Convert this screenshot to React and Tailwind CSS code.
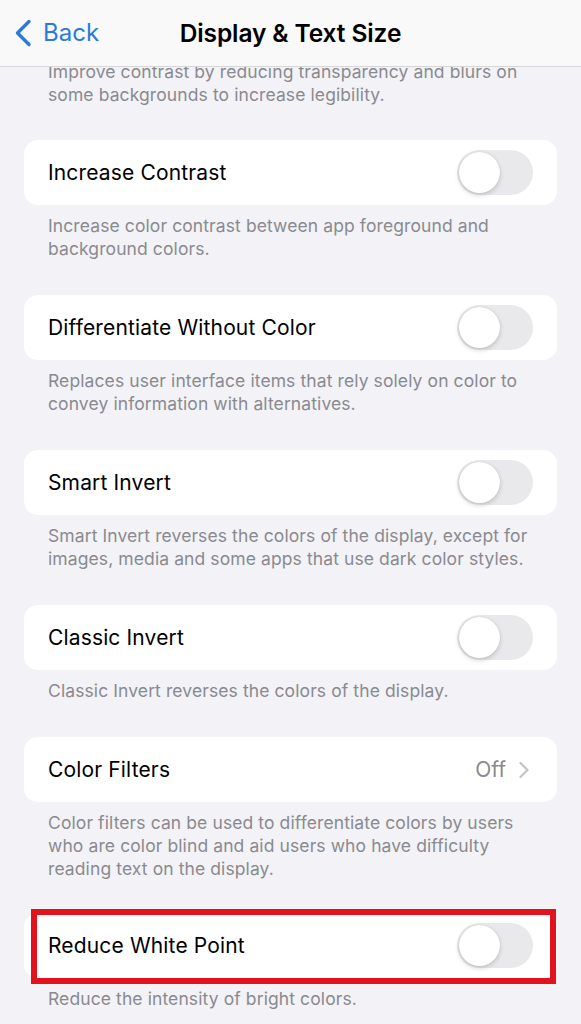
import React from "react";

const Toggle = () => (
  <div className="w-[76px] h-[45px] rounded-full bg-[#e9e9eb] p-[2px] flex items-center shrink-0">
    <div className="w-[41px] h-[41px] rounded-full bg-white shadow-[0_2px_5px_rgba(0,0,0,0.18),0_0_1px_rgba(0,0,0,0.15)]" />
  </div>
);

const Desc = ({ children }) => (
  <div className="px-[48px] pt-[9px] text-[17.5px] leading-[23px] text-[#8a8a8e] tracking-[0.1px]">
    {children}
  </div>
);

const Card = ({ label, right, highlight }) => (
  <div className="relative mx-[24px] h-[65px] rounded-[14px] bg-white flex items-center justify-between pl-[24px] pr-[24px]">
    <span className="text-[21px] text-black tracking-[0.15px]">{label}</span>
    {right}
    {highlight && (
      <div className="absolute left-[7px] right-[1px] top-[-4px] bottom-[-6px] border-[6px] border-[#e3131d] pointer-events-none" />
    )}
  </div>
);

const Chevron = () => (
  <svg width="12" height="18" viewBox="0 0 12 18" fill="none" className="ml-[12px] mr-[3px]">
    <path d="M2.5 2L9.5 9L2.5 16" stroke="#c4c4c7" strokeWidth="2.2" strokeLinecap="round" strokeLinejoin="round" />
  </svg>
);

export default function App() {
  return (
    <div className="w-[581px] h-[1024px] overflow-hidden bg-[#f2f2f7] font-['Inter','Noto_Sans',sans-serif]">
      <div className="h-[67px] bg-[#f9f9f9] border-b border-[#d6d6d8] flex items-center relative">
        <div className="flex items-center pl-[14px]">
          <svg width="18" height="28" viewBox="0 0 18 28" fill="none">
            <path d="M15 2.5L3.5 14L15 25.5" stroke="#2a7bd8" strokeWidth="3.4" strokeLinecap="round" strokeLinejoin="round" />
          </svg>
          <span className="ml-[11px] text-[24px] text-[#2a7bd8]">Back</span>
        </div>
        <div className="absolute inset-0 flex items-center justify-center pointer-events-none">
          <span className="text-[24.5px] font-semibold text-black tracking-[-0.1px]">Display &amp; Text Size</span>
        </div>
      </div>

      <div className="h-[39px] overflow-hidden">
        <div className="-mt-[7px] px-[48px] text-[17.5px] leading-[23px] text-[#8a8a8e] tracking-[0.1px]">
          Improve contrast by reducing transparency and blurs on
          <br />
          some backgrounds to increase legibility.
        </div>
      </div>

      <div className="pt-[34px]">
        <Card label="Increase Contrast" right={<Toggle />} />
        <Desc>
          Increase color contrast between app foreground and
          <br />
          background colors.
        </Desc>
      </div>

      <div className="pt-[35px]">
        <Card label="Differentiate Without Color" right={<Toggle />} />
        <Desc>
          Replaces user interface items that rely solely on color to
          <br />
          convey information with alternatives.
        </Desc>
      </div>

      <div className="pt-[35px]">
        <Card label="Smart Invert" right={<Toggle />} />
        <Desc>
          Smart Invert reverses the colors of the display, except for
          <br />
          images, media and some apps that use dark color styles.
        </Desc>
      </div>

      <div className="pt-[35px]">
        <Card label="Classic Invert" right={<Toggle />} />
        <Desc>Classic Invert reverses the colors of the display.</Desc>
      </div>

      <div className="pt-[35px]">
        <Card
          label="Color Filters"
          right={
            <div className="flex items-center">
              <span className="text-[21px] text-[#8a8a8e]">Off</span>
              <Chevron />
            </div>
          }
        />
        <Desc>
          Color filters can be used to differentiate colors by users
          <br />
          who are color blind and aid users who have difficulty
          <br />
          reading text on the display.
        </Desc>
      </div>

      <div className="pt-[33px]">
        <Card label="Reduce White Point" right={<Toggle />} highlight />
        <Desc>Reduce the intensity of bright colors.</Desc>
      </div>
    </div>
  );
}
